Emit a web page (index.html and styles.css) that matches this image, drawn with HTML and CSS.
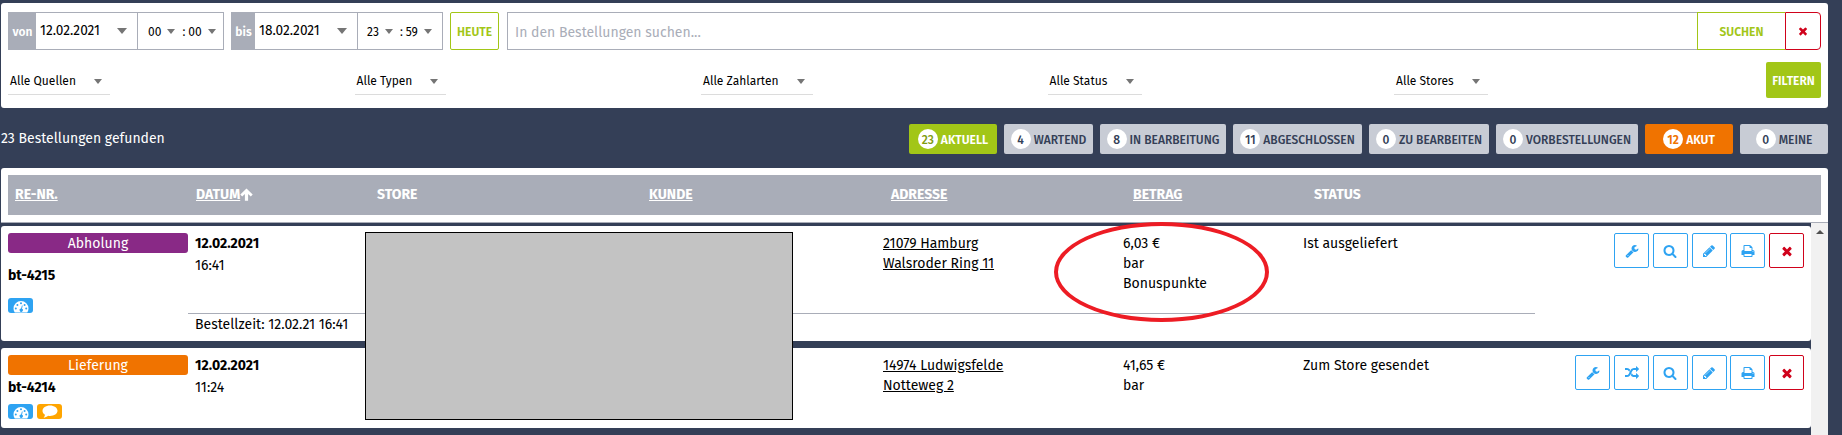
FILE: index.html
```html
<!DOCTYPE html>
<html lang="de">
  <head>
    <meta charset="UTF-8" />
    <title>Bestellungen</title>
    <link rel="stylesheet" href="styles.css">
  </head>
  <body>
    <svg class="sprite" width="0" height="0">
      <symbol id="i-wrench" viewBox="0 0 1792 1792"><path d="M448 1472q0-26-19-45t-45-19-45 19-19 45 19 45 45 19 45-19 19-45zm644-420l-682 682q-37 37-90 37-52 0-91-37l-106-108q-38-36-38-90 0-53 38-91l681-681q39 98 114.500 173.500t173.500 114.500zm634-435q0 39-23 106-47 134-164.500 217.500t-258.500 83.500q-185 0-316.500-131.500t-131.500-316.500 131.500-316.500 316.500-131.500q58 0 121.500 16.500t107.500 46.500q16 11 16 28t-16 28l-293 169v224l193 107q5-3 79-48.500t135.500-81 70.500-35.500q15 0 23.500 10t8.500 25z"/></symbol>
      <symbol id="i-random" viewBox="0 0 1792 1792"><path d="M666 481q-60 92-137 273-22-45-37-72.500t-40.500-63.500-51-56.500-63-35-81.500-14.500h-224q-14 0-23-9t-9-23v-192q0-14 9-23t23-9h224q250 0 410 225zm1126 799q0 14-9 23l-320 320q-9 9-23 9-13 0-22.500-9.500t-9.500-22.500v-192q-32 0-85 .5t-81 1-73-1-71-5-64-10.500-63-18.500-58-28.500-59-40-55-53.500-56-69.500q59-93 136-273 22 45 37 72.500t40.500 63.500 51 56.500 63 35 81.500 14.500h256v-192q0-14 9-23t23-9q12 0 24 10l319 319q9 9 9 23zm0-896q0 14-9 23l-320 320q-9 9-23 9-13 0-22.500-9.500t-9.500-22.500v-192h-256q-48 0-87 15t-69 45-51 61.500-45 77.500q-32 62-78 171-29 66-49.500 111t-54 105-64 100-74 83-90 68.500-106.500 42-128 16.500h-224q-14 0-23-9t-9-23v-192q0-14 9-23t23-9h224q48 0 87-15t69-45 51-61.500 45-77.500q32-62 78-171 29-66 49.500-111t54-105 64-100 74-83 90-68.500 106.500-42 128-16.500h256v-192q0-14 9-23t23-9q12 0 24 10l319 319q9 9 9 23z"/></symbol>
      <symbol id="i-search" viewBox="0 0 1792 1792"><path d="M1216 832q0-185-131.500-316.500t-316.500-131.500-316.500 131.500-131.500 316.500 131.500 316.500 316.500 131.500 316.500-131.500 131.500-316.500zm512 832q0 52-38 90t-90 38q-54 0-90-38l-343-342q-179 124-399 124-143 0-273.500-55.500t-225-150-150-225-55.500-273.500 55.500-273.500 150-225 225-150 273.500-55.500 273.500 55.500 225 150 150 225 55.500 273.500q0 220-124 399l343 343q37 37 37 90z"/></symbol>
      <symbol id="i-pencil" viewBox="0 0 1792 1792"><path d="M491 1536l91-91-235-235-91 91v107h128v128h107zm523-928q0-22-22-22-10 0-17 7l-542 542q-7 7-7 17 0 22 22 22 10 0 17-7l542-542q7-7 7-17zm-54-192l416 416-832 832h-416v-416zm683 96q0 53-37 90l-166 166-416-416 166-165q36-38 90-38 53 0 91 38l235 234q37 39 37 91z"/></symbol>
      <symbol id="i-print" viewBox="0 0 1792 1792"><path d="M448 1536h896v-256h-896v256zm0-640h896v-384h-160q-40 0-68-28t-28-68v-160h-640v640zm1152 64q0-26-19-45t-45-19-45 19-19 45 19 45 45 19 45-19 19-45zm128 0v416q0 13-9.500 22.500t-22.500 9.500h-224v160q0 40-28 68t-68 28h-960q-40 0-68-28t-28-68v-160h-224q-13 0-22.500-9.500t-9.500-22.500v-416q0-79 56.500-135.500t135.500-56.500h64v-544q0-40 28-68t68-28h672q40 0 88 20t76 48l152 152q28 28 48 76t20 88v256h64q79 0 135.500 56.500t56.500 135.500z"/></symbol>
      <symbol id="i-times" viewBox="0 0 1792 1792"><path d="M1490 1322q0 40-28 68l-136 136q-28 28-68 28t-68-28l-294-294-294 294q-28 28-68 28t-68-28l-136-136q-28-28-28-68t28-68l294-294-294-294q-28-28-28-68t28-68l136-136q28-28 68-28t68 28l294 294 294-294q28-28 68-28t68 28l136 136q28 28 28 68t-28 68l-294 294 294 294q28 28 28 68z"/></symbol>
      <symbol id="i-gauge" viewBox="0 0 16 13"><path fill-rule="evenodd" d="M8 1a7.500 7.500 0 0 0-7.500 7.500c0 1.500.4 2.700 1.100 3.800.1.200.3.200.5.200h11.800c.2 0 .4 0 .5-.2.700-1.100 1.100-2.300 1.100-3.800A7.500 7.500 0 0 0 8 1zM2.800 7.500a1 1 0 1 1 0 2 1 1 0 0 1 0-2zM4.400 4a1 1 0 1 1 0 2 1 1 0 0 1 0-2zM8 2.300a1 1 0 1 1 0 2 1 1 0 0 1 0-2zM11.600 4a1 1 0 1 1 0 2 1 1 0 0 1 0-2zM13.200 7.500a1 1 0 1 1 0 2 1 1 0 0 1 0-2zM8.900 5.400l.8.200-.7 3.200a1.600 1.600 0 1 1-.9-.2z"/></symbol>
      <symbol id="i-comment" viewBox="0 0 16 13"><path d="M8 .5c4.200 0 7.500 2.300 7.500 5.200s-3.300 5.200-7.500 5.200c-.7 0-1.300 0-1.900-.2-1.300 1.100-2.900 1.800-4.500 2 .8-.8 1.300-1.700 1.400-2.900C1.400 8.800.5 7.300.5 5.700.5 2.800 3.800.5 8 .5z"/></symbol>
      <symbol id="i-up" viewBox="0 0 13 13"><path d="M6.500.4l6.200 6.200-1.900 2-2.700-2.500v6.700H4.900V6.100L2.200 8.600.3 6.600z"/></symbol>
    </svg>

    <section class="filter-panel">
      <div class="search-row">
        <div class="date-group from">
          <span class="tag">von</span>
          <span class="date">12.02.2021<i class="caret big"></i></span>
          <span class="time">00<i class="caret"></i><b>:</b>00<i class="caret"></i></span>
        </div>
        <div class="date-group to">
          <span class="tag">bis</span>
          <span class="date">18.02.2021<i class="caret big"></i></span>
          <span class="time">23<i class="caret"></i><b>:</b>59<i class="caret"></i></span>
        </div>
        <div class="today">HEUTE</div>
        <div class="search-field">In den Bestellungen suchen...</div>
        <div class="search-btn">SUCHEN</div>
        <div class="clear-btn"><svg class="icon"><use href="#i-times"/></svg></div>
      </div>
      <div class="select-row">
        <div class="cell"><span class="select">Alle Quellen<i class="caret"></i></span></div>
        <div class="cell"><span class="select s2">Alle Typen<i class="caret"></i></span></div>
        <div class="cell"><span class="select s3">Alle Zahlarten<i class="caret"></i></span></div>
        <div class="cell"><span class="select s4">Alle Status<i class="caret"></i></span></div>
        <div class="cell"><span class="select s5">Alle Stores<i class="caret"></i></span></div>
        <div class="filter-btn">FILTERN</div>
      </div>
    </section>

    <section class="summary">
      <div class="found">23 Bestellungen gefunden</div>
      <div class="tabs">
        <div class="tab w88 green"><em>23</em><span>AKTUELL</span></div>
        <div class="tab w89"><em>4</em><span>WARTEND</span></div>
        <div class="tab w126"><em>8</em><span>IN BEARBEITUNG</span></div>
        <div class="tab w129"><em>11</em><span>ABGESCHLOSSEN</span></div>
        <div class="tab w120"><em>0</em><span>ZU BEARBEITEN</span></div>
        <div class="tab w142"><em>0</em><span>VORBESTELLUNGEN</span></div>
        <div class="tab w88 orange"><em>12</em><span>AKUT</span></div>
        <div class="tab w88"><em>0</em><span>MEINE</span></div>
      </div>
    </section>

    <section class="table-head">
      <div class="head-row">
        <span><u>RE-NR.</u></span>
        <span><u>DATUM</u><svg class="sort"><use href="#i-up"/></svg></span>
        <span>STORE</span>
        <span><u>KUNDE</u></span>
        <span><u>ADRESSE</u></span>
        <span><u>BETRAG</u></span>
        <span>STATUS</span>
      </div>
    </section>

    <section class="list">
      <div class="orders">
        <article class="order tall">
          <div class="col-nr">
            <div class="type pickup">Abholung</div>
            <div class="nr">bt-4215</div>
            <div class="flags"><i class="flag"><svg><use href="#i-gauge"/></svg></i></div>
          </div>
          <div class="col-date"><strong>12.02.2021</strong><span>16:41</span></div>
          <div class="col-address"><u>21079 Hamburg</u><br><u>Walsroder Ring 11</u></div>
          <div class="col-amount">6,03 €<br>bar<br>Bonuspunkte</div>
          <div class="col-status">Ist ausgeliefert</div>
          <div class="actions">
            <a class="btn"><svg class="icon"><use href="#i-wrench"/></svg></a>
            <a class="btn"><svg class="icon"><use href="#i-search"/></svg></a>
            <a class="btn"><svg class="icon"><use href="#i-pencil"/></svg></a>
            <a class="btn"><svg class="icon"><use href="#i-print"/></svg></a>
            <a class="btn red"><svg class="icon"><use href="#i-times"/></svg></a>
          </div>
          <div class="order-time">Bestellzeit: 12.02.21 16:41</div>
        </article>
        <article class="order">
          <div class="col-nr">
            <div class="type delivery">Lieferung</div>
            <div class="nr">bt-4214</div>
            <div class="flags">
              <i class="flag"><svg><use href="#i-gauge"/></svg></i>
              <i class="flag note"><svg><use href="#i-comment"/></svg></i>
            </div>
          </div>
          <div class="col-date"><strong>12.02.2021</strong><span>11:24</span></div>
          <div class="col-address"><u>14974 Ludwigsfelde</u><br><u>Notteweg 2</u></div>
          <div class="col-amount">41,65 €<br>bar</div>
          <div class="col-status">Zum Store gesendet</div>
          <div class="actions">
            <a class="btn"><svg class="icon"><use href="#i-wrench"/></svg></a>
            <a class="btn"><svg class="icon"><use href="#i-random"/></svg></a>
            <a class="btn"><svg class="icon"><use href="#i-search"/></svg></a>
            <a class="btn"><svg class="icon"><use href="#i-pencil"/></svg></a>
            <a class="btn"><svg class="icon"><use href="#i-print"/></svg></a>
            <a class="btn red"><svg class="icon"><use href="#i-times"/></svg></a>
          </div>
        </article>
      </div>
      <div class="scrollbar"><i></i></div>
      <!-- covers store and customer -->
      <div class="cover"></div>
      <div class="marker"></div>
    </section>
  </body>
</html>
```
FILE: styles.css
```css
* {
  box-sizing: border-box;
}

body {
  margin: 0;
  padding: 3px 14px 0 1px;
  height: 435px;
  overflow: hidden;
  background: #343f57;
  color: #000;
  font-family: "Fira Sans", "Open Sans", "Noto Sans", sans-serif;
  font-stretch: 90%;
  font-size: 14px;
  line-height: 20px;
  white-space: nowrap;
}

.sprite {
  position: absolute;
}

.icon {
  width: 14px;
  height: 14px;
  fill: currentColor;
}

.caret {
  width: 0;
  height: 0;
  border: 4.5px solid transparent;
  border-top: 5px solid #757575;
  border-bottom: 0;
}

.caret.big {
  border-width: 6px 5.5px 0;
}

/* Filter */
.filter-panel {
  height: 105px;
  padding: 9px 7px 0;
  background: #fff;
  border-radius: 3px;
}

.search-row {
  display: flex;
  height: 38px;
}

.date-group {
  display: flex;
  width: 216px;
  margin-right: 7px;
  border: 1px solid #a9adb8;
}

.date-group.to {
  width: 212px;
}

.tag {
  width: 27px;
  line-height: 38px;
  text-align: center;
  background: #a9adb8;
  color: #fff;
  font-weight: 600;
  font-size: 12px;
}

.to .tag {
  width: 23px;
}

.date {
  display: flex;
  align-items: center;
  justify-content: space-between;
  width: 102px;
  padding: 0 10px 0 4px;
  border-right: 1px solid #a9adb8;
  font-size: 13.7px;
}

.to .date {
  width: 103px;
}

.time {
  flex: 1;
  display: flex;
  align-items: center;
  padding: 1px 0 0 10px;
  font-size: 12px;
}

.time .caret {
  margin-left: 6px;
}

.time b {
  font-weight: 400;
  margin: 0 3px 0 7px;
}

.to .time {
  padding-left: 9px;
}

.today {
  width: 49px;
  margin-right: 8px;
  border: 1px solid #a2c617;
  border-radius: 2px;
  color: #a2c617;
  font-size: 12px;
  font-weight: 600;
  line-height: 38px;
  text-align: center;
}

.search-field {
  flex: 1;
  padding-left: 7px;
  border: 1px solid #a9adb8;
  border-right: 0;
  color: #a9adb8;
  font-size: 14px;
  line-height: 39px;
}

.search-btn {
  width: 88px;
  border: 1px solid #a2c617;
  border-right: 0;
  color: #a2c617;
  font-size: 12px;
  font-weight: 600;
  line-height: 38px;
  text-align: center;
}

.clear-btn {
  display: flex;
  align-items: center;
  justify-content: center;
  width: 36px;
  border: 1px solid #d0021b;
  border-radius: 0 4px 4px 0;
  color: #d0021b;
}

.clear-btn .icon {
  width: 12px;
  height: 12px;
}

.select-row {
  display: flex;
  margin-top: 12px;
}

.cell {
  width: 346.5px;
}

.select {
  display: flex;
  align-items: center;
  justify-content: space-between;
  width: 102px;
  height: 33px;
  padding: 6px 8px 0 2px;
  border-bottom: 1px solid #dcdcdc;
  font-size: 12px;
}

.select.s2 {
  width: 91px;
}

.select.s3 {
  width: 112px;
}

.select.s4 {
  width: 94px;
}

.select.s5 {
  width: 94px;
}

.filter-btn {
  width: 55px;
  height: 36px;
  margin-left: auto;
  border-radius: 2px;
  background: #a2c617;
  color: #fff;
  font-size: 12px;
  font-weight: 600;
  line-height: 38px;
  text-align: center;
}

.cell:nth-child(5) {
  width: 330px;
}

/* Summary */
.summary {
  display: flex;
  justify-content: space-between;
  height: 60px;
  padding-top: 16px;
}

.found {
  color: #fff;
  line-height: 30px;
}

.tabs {
  display: flex;
  gap: 7px;
}

.tab {
  display: flex;
  align-items: center;
  justify-content: center;
  gap: 3px;
  height: 30px;
  border-radius: 2px;
  background: #c8ccd5;
  color: #343f57;
  font-size: 12px;
  font-weight: 500;
}

.tab span {
  padding-top: 2px;
}

.tab em {
  width: 20px;
  height: 20px;
  border-radius: 50%;
  background: #fff;
  font-style: normal;
  font-size: 12px;
  line-height: 22px;
  text-align: center;
}

.w88 { width: 88px; }
.w89 { width: 89px; }
.w120 { width: 120px; }
.w126 { width: 126px; }
.w129 { width: 129px; }
.w142 { width: 142px; }

.tab.green {
  background: #a2c617;
  color: #fff;
  font-weight: 600;
}

.tab.green em {
  color: #7f9c10;
  font-weight: 500;
}

.tab.orange {
  background: #f07300;
  color: #fff;
  font-weight: 600;
}

.tab.orange em {
  color: #f07300;
}

/* Table head */
.table-head {
  height: 55px;
  padding: 7px 7px 0;
  border-bottom: 1px solid #a9adb8;
  border-radius: 3px 3px 0 0;
  background: #fff;
}

.head-row {
  display: grid;
  grid-template-columns: 181px 181px 272px 242px 242px 181px 1fr;
  height: 40px;
  padding-left: 7px;
  background: #a9adb8;
  color: #fff;
  font-weight: 700;
  line-height: 40px;
}

.sort {
  width: 13px;
  height: 13px;
  fill: #fff;
  vertical-align: -2px;
}

/* Orders */
.list {
  display: flex;
  position: relative;
  height: 212px;
}

.orders {
  flex: 1;
  padding-top: 3px;
}

.order {
  display: grid;
  grid-template-columns: 187px 688px 240px 180px 1fr auto;
  grid-template-rows: 73px;
  height: 80px;
  padding: 7px 7px 0;
  margin-bottom: 7px;
  border-radius: 3px;
  background: #fff;
}

.order.tall {
  grid-template-rows: 80px 28px;
  height: 115px;
}

.col-nr {
  width: 180px;
  grid-row: span 2;
}

.col-date,
.col-address,
.col-amount,
.col-status {
  padding-top: 1px;
}

.type {
  height: 20px;
  border-radius: 3px;
  color: #fff;
  line-height: 22px;
  text-align: center;
}

.pickup {
  background: #892986;
}

.delivery {
  background: #f07300;
}

.nr {
  height: 29px;
  font-weight: 700;
  line-height: 26px;
}

.tall .nr {
  height: 45px;
  line-height: 46px;
}

.flags {
  display: flex;
  gap: 4px;
}

.flag {
  display: flex;
  justify-content: center;
  width: 25px;
  height: 15px;
  padding-top: 2px;
  border-radius: 3px;
  background: #2ea3f2;
}

.flag.note {
  padding-top: 1px;
  background: #ffa500;
}

.flag svg {
  width: 16px;
  height: 13px;
  fill: #fff;
}

.col-date strong,
.col-date span {
  display: block;
  line-height: 19px;
}

.col-date span {
  margin-top: 3px;
}

.order-time {
  grid-column: 2 / 6;
  width: 1347px;
  margin-left: -7px;
  padding: 1px 0 0 7px;
  border-top: 1px solid #a9adb8;
}

.actions {
  display: flex;
  gap: 3.75px;
}

.btn {
  display: flex;
  align-items: center;
  justify-content: center;
  width: 35px;
  height: 35px;
  border: 1px solid #2ea3f2;
  border-radius: 2px;
  color: #2ea3f2;
}

.red {
  border-color: #d0021b;
  color: #d0021b;
}

.scrollbar {
  width: 17px;
  background: #f1f1f1;
}

.scrollbar i {
  display: block;
  width: 0;
  margin: 7px auto 0;
  border: 4px solid transparent;
  border-top: 0;
  border-bottom-color: #505050;
}

.cover {
  position: absolute;
  left: 364px;
  top: 9px;
  width: 428px;
  height: 188px;
  border: 1px solid #000;
  background: #c3c3c3;
}

.marker {
  position: absolute;
  left: 1053px;
  top: -1px;
  width: 215px;
  height: 100px;
  border: 4px solid #ed1c24;
  border-radius: 50%;
}
```
